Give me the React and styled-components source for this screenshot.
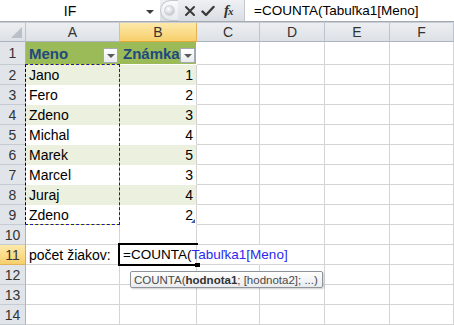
import React from 'react';
import styled, { createGlobalStyle } from 'styled-components';

const GlobalStyle = createGlobalStyle`
  html, body {
    margin: 0;
    padding: 0;
    background: #ffffff;
    overflow: hidden;
  }
  body {
    font-family: "Liberation Sans", Arial, sans-serif;
  }
`;

const COLS = [26, 94, 77, 63, 65, 65, 64];
const TEMPLATE = COLS.map((w) => `${w}px`).join(' ');

const Window = styled.div`
  width: 454px;
  height: 325px;
  overflow: hidden;
  display: flex;
  flex-direction: column;
  background: #fff;
  position: relative;
`;

// formula bar
const FormulaBar = styled.div`
  display: flex;
  height: 21px;
  border-bottom: 1px solid #a3aab4;
  background: #fff;
`;

const NameBox = styled.div`
  width: 160px;
  display: flex;
  align-items: center;
`;

const NameText = styled.div`
  width: 140px;
  text-align: center;
  font-size: 14px;
  color: #000;
`;

const DropArrow = styled.div`
  width: 0;
  height: 0;
  border-left: 4px solid transparent;
  border-right: 4px solid transparent;
  border-top: 4px solid #3c3c3c;
  margin-left: 6px;
  margin-top: 2px;
`;

const Controls = styled.div`
  width: 84px;
  display: flex;
  align-items: center;
  background: linear-gradient(#eef0f3, #dadee4);
  box-sizing: border-box;
  gap: 4px;
`;

const GripBump = styled.div`
  width: 18px;
  height: 21px;
  box-sizing: border-box;
  border-radius: 11px 0 0 11px;
  border: 1px solid #c3c8cf;
  border-right: none;
  background: linear-gradient(#fbfbfc, #e6e9ed);
  display: flex;
  align-items: center;
  justify-content: center;
  margin-right: 1px;
`;

const Grip = styled.div`
  width: 9px;
  height: 9px;
  border-radius: 50%;
  background: radial-gradient(circle at 40% 35%, #ffffff, #c4c9d0 75%);
  border: 1px solid #d0d4da;
`;

const IconBox = styled.div`
  width: 14px;
  height: 14px;
  display: flex;
  align-items: center;
  justify-content: center;
`;

const Fx = styled.div`
  font-family: "Liberation Serif", "Times New Roman", serif;
  font-style: italic;
  font-weight: bold;
  font-size: 15px;
  color: #333;
  margin-left: 5px;
  letter-spacing: -1px;

  span {
    font-size: 11px;
  }
`;

const FormulaInput = styled.div`
  flex: 1;
  display: flex;
  align-items: center;
  padding-left: 9px;
  font-size: 13.5px;
  color: #000;
  border-left: 1px solid #c3c8cf;
  white-space: nowrap;
`;

const Band = styled.div`
  height: 3px;
  background: #e6e9ed;
  border-top: 1px solid #c9ced5;
`;

// sheet
const Sheet = styled.div`
  display: flex;
  flex-direction: column;
`;

const Row = styled.div`
  display: grid;
  grid-template-columns: ${TEMPLATE};
  height: ${(p) => p.$h}px;
`;

const ColHead = styled.div`
  box-sizing: border-box;
  background: ${(p) =>
    p.$sel ? 'linear-gradient(#fde9aa, #f7cf6c)' : 'linear-gradient(#eceef1, #dde1e6)'};
  border-right: 1px solid ${(p) => (p.$sel ? '#e3b35a' : '#bcc3cc')};
  border-bottom: 1px solid ${(p) => (p.$sel ? '#e3a83c' : '#aab3be')};
  display: flex;
  align-items: center;
  justify-content: center;
  font-size: 14px;
  color: #333;
  position: relative;
`;

const CornerTri = styled.div`
  position: absolute;
  right: 3px;
  bottom: 3px;
  width: 0;
  height: 0;
  border-left: 11px solid transparent;
  border-bottom: 11px solid #bac0c8;
`;

const RowHead = styled.div`
  box-sizing: border-box;
  background: ${(p) => (p.$sel ? 'linear-gradient(#fde9aa, #f7cf6c)' : '#e1e5ea')};
  border-right: 1px solid ${(p) => (p.$sel ? '#e3a83c' : '#aab3be')};
  border-bottom: 1px solid ${(p) => (p.$sel ? '#e3b35a' : '#c5cbd3')};
  display: flex;
  align-items: center;
  justify-content: center;
  font-size: 14px;
  color: #333;
`;

const Cell = styled.div`
  box-sizing: border-box;
  position: relative;
  background: ${(p) => p.$bg || 'transparent'};
  border-right: 1px solid ${(p) => (p.$noRight ? 'transparent' : p.$line || '#d4d4d4')};
  border-bottom: 1px solid ${(p) => p.$line || '#d4d4d4'};
  display: flex;
  align-items: center;
  justify-content: ${(p) => (p.$right ? 'flex-end' : 'flex-start')};
  padding: 0 3px;
  font-size: ${(p) => p.$size || 14}px;
  font-weight: ${(p) => (p.$bold ? 'bold' : 'normal')};
  color: ${(p) => p.$color || '#000'};
  white-space: nowrap;
  overflow: visible;
  z-index: ${(p) => (p.$top ? 2 : 'auto')};
`;

const FilterBtn = styled.div`
  position: absolute;
  right: 1px;
  top: 6px;
  width: 15px;
  height: 15px;
  box-sizing: border-box;
  background: linear-gradient(#ffffff, #e8eaec);
  border: 1px solid #a6abb1;
  display: flex;
  align-items: center;
  justify-content: center;

  &::after {
    content: '';
    width: 0;
    height: 0;
    border-left: 4px solid transparent;
    border-right: 4px solid transparent;
    border-top: 4px solid #5a5a5a;
  }
`;

const MarchingAnts = styled.div`
  position: absolute;
  left: -1px;
  top: -1px;
  width: 95px;
  height: 161px;
  box-sizing: border-box;
  border: 1px solid #f0f000;
  pointer-events: none;
  z-index: 3;

  &::after {
    content: '';
    position: absolute;
    inset: -1px;
    border: 1px dashed #1515c8;
    border-left-color: #000;
  }
`;

const ResizeGrip = styled.div`
  position: absolute;
  right: 1px;
  bottom: 1px;
  width: 0;
  height: 0;
  border-left: 4px solid transparent;
  border-bottom: 4px solid #3d5fa8;
`;

const ActiveBox = styled.div`
  position: absolute;
  left: -2px;
  top: -2px;
  width: 80px;
  height: 23px;
  box-sizing: border-box;
  border: 2px solid #000;
  border-right: none;
  pointer-events: none;
  z-index: -1;

  &::after {
    content: '';
    position: absolute;
    right: -2px;
    bottom: -3px;
    width: 5px;
    height: 4px;
    background: #000;
  }
`;

const Ref = styled.span`
  color: #2a2af0;
`;

const Tooltip = styled.div`
  position: absolute;
  left: 130px;
  top: 271px;
  height: 17px;
  box-sizing: border-box;
  padding: 0 4px 0 3px;
  display: flex;
  align-items: center;
  font-size: 11.5px;
  color: #4a4a4a;
  background: linear-gradient(#ffffff, #e9ebee);
  border: 1px solid #8f949b;
  border-radius: 2px;
  box-shadow: 1px 1px 2px rgba(0, 0, 0, 0.2);
  white-space: nowrap;
  z-index: 5;

  b {
    color: #333;
  }
`;

const names = ['Jano', 'Fero', 'Zdeno', 'Michal', 'Marek', 'Marcel', 'Juraj', 'Zdeno'];
const grades = [1, 2, 3, 4, 5, 3, 4, 2];
const LETTERS = ['A', 'B', 'C', 'D', 'E', 'F'];

const EmptyCells = ({ count, noRightFirst }) =>
  Array.from({ length: count }).map((_, i) => (
    <Cell key={i} $noRight={noRightFirst && i === 0} />
  ));

const App = () => {
  return (
    <Window>
      <GlobalStyle />
      <FormulaBar>
        <NameBox>
          <NameText>IF</NameText>
          <DropArrow />
        </NameBox>
        <Controls>
          <GripBump>
            <Grip />
          </GripBump>
          <IconBox>
            <svg width="12" height="12" viewBox="0 0 12 12">
              <path d="M2 2 L10 10 M10 2 L2 10" stroke="#3a3a3a" strokeWidth="2" strokeLinecap="round" />
            </svg>
          </IconBox>
          <IconBox>
            <svg width="14" height="12" viewBox="0 0 14 12">
              <path d="M1.5 6.5 L5 10 L12.5 2" stroke="#3a3a3a" strokeWidth="2.4" fill="none" strokeLinecap="round" strokeLinejoin="round" />
            </svg>
          </IconBox>
          <Fx>
            f<span>x</span>
          </Fx>
        </Controls>
        <FormulaInput>=COUNTA(Tabuľka1[Meno]</FormulaInput>
      </FormulaBar>
      <Band />
      <Sheet>
        <Row $h={19}>
          <ColHead>
            <CornerTri />
          </ColHead>
          {LETTERS.map((l) => (
            <ColHead key={l} $sel={l === 'B'}>
              {l}
            </ColHead>
          ))}
        </Row>

        <Row $h={23}>
          <RowHead>1</RowHead>
          <Cell $bg="#9bbb59" $line="#9bbb59" $bold $color="#1f497d" $size={15}>
            Meno
            <FilterBtn />
          </Cell>
          <Cell $bg="#9bbb59" $line="#ffffff" $bold $color="#1f497d" $size={15}>
            Známka
            <FilterBtn />
          </Cell>
          <EmptyCells count={4} />
        </Row>

        {names.map((name, i) => {
          const bg = i % 2 === 0 ? '#ebf1de' : '#ffffff';
          return (
            <Row $h={20} key={i}>
              <RowHead>{i + 2}</RowHead>
              <Cell $bg={bg} $line={bg} $top={i === 0}>
                {name}
                {i === 0 && <MarchingAnts />}
              </Cell>
              <Cell $bg={bg} $right style={{ borderBottomColor: bg }}>
                {grades[i]}
                {i === names.length - 1 && <ResizeGrip />}
              </Cell>
              <EmptyCells count={4} />
            </Row>
          );
        })}

        <Row $h={20}>
          <RowHead>10</RowHead>
          <EmptyCells count={6} />
        </Row>

        <Row $h={20}>
          <RowHead $sel>11</RowHead>
          <Cell>počet žiakov:</Cell>
          <Cell $top $size={13.5}>
            =COUNTA(<Ref>Tabuľka1[Meno]</Ref>
            <ActiveBox />
          </Cell>
          <EmptyCells count={4} noRightFirst />
        </Row>

        {[12, 13, 14].map((n) => (
          <Row $h={20} key={n}>
            <RowHead>{n}</RowHead>
            <EmptyCells count={6} />
          </Row>
        ))}
      </Sheet>
      <Tooltip>
        COUNTA(<b>hodnota1</b>; [hodnota2]; ...)
      </Tooltip>
    </Window>
  );
};

export default App;
